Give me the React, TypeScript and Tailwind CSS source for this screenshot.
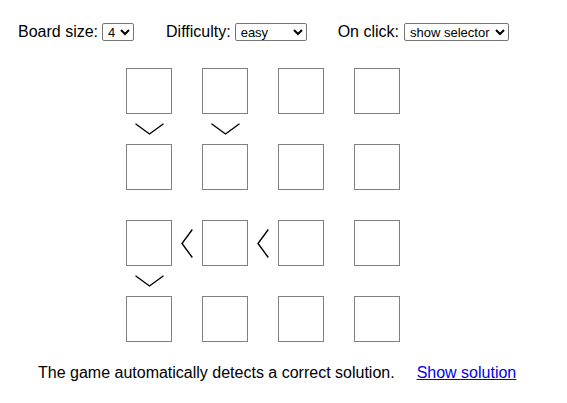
import { useState } from 'react'

const SIZE = 4

// constraints between neighbouring cells
const DOWN = ['0-0', '0-1', '2-0'] // "v" below cell row-col
const LEFT = ['2-0', '2-1'] // "<" right of cell row-col

function ChevronDown() {
  return (
    <svg width="29" height="12" viewBox="0 0 29 12" className="block">
      <path d="M0.5 0.7 L14.5 11 L28.5 0.7" fill="none" stroke="#000" strokeWidth="1.4" />
    </svg>
  )
}

function ChevronLeft() {
  return (
    <svg width="12" height="29" viewBox="0 0 12 29" className="block">
      <path d="M11.3 0.5 L1 14.5 L11.3 28.5" fill="none" stroke="#000" strokeWidth="1.4" />
    </svg>
  )
}

export default function App() {
  const [size, setSize] = useState('4')
  const [difficulty, setDifficulty] = useState('easy')
  const [onClick, setOnClick] = useState('selector')

  const cells = []
  for (let r = 0; r < SIZE * 2 - 1; r++) {
    for (let c = 0; c < SIZE * 2 - 1; c++) {
      const key = `${r}-${c}`
      if (r % 2 === 0 && c % 2 === 0) {
        cells.push(<div key={key} className="border border-[#808080] bg-white" />)
      } else if (r % 2 === 1 && c % 2 === 0) {
        const id = `${(r - 1) / 2}-${c / 2}`
        cells.push(
          <div key={key} className="flex items-center justify-center">
            {DOWN.includes(id) && <ChevronDown />}
          </div>
        )
      } else if (r % 2 === 0 && c % 2 === 1) {
        const id = `${r / 2}-${(c - 1) / 2}`
        cells.push(
          <div key={key} className="flex items-center justify-center">
            {LEFT.includes(id) && <ChevronLeft />}
          </div>
        )
      } else {
        cells.push(<div key={key} />)
      }
    }
  }

  const selectCls =
    "h-[18px] border border-[#767676] rounded-[2px] bg-white text-[13px] leading-none font-['Liberation_Sans',Arial,sans-serif] pl-[1px]"

  return (
    <div className="w-[567px] h-[403px] bg-white text-black text-[16px] leading-[18px] font-['Liberation_Sans',Arial,sans-serif]">
      {/* controls */}
      <div className="flex items-center pt-[23px] pl-[18px]">
        <span>Board size:</span>
        <select value={size} onChange={(e) => setSize(e.target.value)} className={`${selectCls} ml-[4px] w-[32px]`}>
          <option value="4">4</option>
          <option value="5">5</option>
          <option value="6">6</option>
        </select>
        <span className="ml-[32px]">Difficulty:</span>
        <select value={difficulty} onChange={(e) => setDifficulty(e.target.value)} className={`${selectCls} ml-[4px] w-[72px]`}>
          <option value="easy">easy</option>
          <option value="medium">medium</option>
          <option value="hard">hard</option>
        </select>
        <span className="ml-[31px]">On click:</span>
        <select value={onClick} onChange={(e) => setOnClick(e.target.value)} className={`${selectCls} ml-[5px] w-[105px]`}>
          <option value="selector">show selector</option>
          <option value="cycle">cycle numbers</option>
        </select>
      </div>

      {/* board */}
      <div className="ml-[126px] mt-[27px] grid grid-cols-[46px_30px_46px_30px_46px_30px_46px] grid-rows-[46px_30px_46px_30px_46px_30px_46px] w-max">
        {cells}
      </div>

      {/* footer */}
      <div className="flex pl-[38px] mt-[22px]">
        <span>The game automatically detects a correct solution.</span>
        <a href="#" className="ml-[22px] text-[#0000ee] underline">
          Show solution
        </a>
      </div>
    </div>
  )
}
